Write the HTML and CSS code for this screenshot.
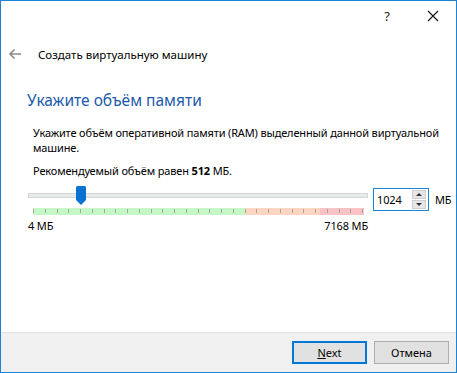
FILE: index.html
```html
<!DOCTYPE html>
<html lang="ru">
<head>
  <meta charset="UTF-8" />
  <title>Создать виртуальную машину</title>
  <link rel="stylesheet" href="styles.css">
</head>
<body>

<div class="window">
  <div class="titlebar">
    <span class="help">?</span>
    <span class="close">
      <svg width="12" height="12" viewBox="0 0 12 12"><path d="M1 1 L11 11 M11 1 L1 11" stroke="#111" stroke-width="1.1" fill="none"/></svg>
    </span>
  </div>

  <div class="nav">
    <svg class="back" width="14" height="12" viewBox="0 0 14 12"><path d="M13 6 H2 M6.5 1.5 L2 6 L6.5 10.5" stroke="#8a8a8a" stroke-width="1.6" fill="none"/></svg>
    <span>Создать виртуальную машину</span>
  </div>

  <div class="content">
    <h1>Укажите объём памяти</h1>
    <p class="desc">Укажите объём оперативной памяти (RAM) выделенный данной виртуальной машине.</p>
    <p class="rec">Рекомендуемый объём равен <b>512</b> МБ.</p>

    <div class="memory-row">
      <div class="slider">
        <div class="track">
          <svg class="handle" width="12" height="19" viewBox="0 0 12 19"><path d="M1 1.5 Q1 0 2.5 0 H9.5 Q11 0 11 1.5 V14 L6 19 L1 14 Z" fill="#0a72d1"/></svg>
        </div>
        <div class="scale"></div>
        <div class="limits"><span>4 МБ</span><span>7168 МБ</span></div>
      </div>

      <div class="spin">
        <span class="value">1024</span>
        <div class="arrows">
          <span class="up"></span>
          <span class="down"></span>
        </div>
      </div>
      <span class="unit">МБ</span>
    </div>
  </div>

  <div class="footer">
    <button class="btn default"><u>N</u>ext</button>
    <button class="btn">Отмена</button>
  </div>
</div>

</body>
</html>
```

FILE: styles.css
```css
:root {
  --accent: #1883d7;
  --text: #000;
  --heading: #1c5aab;
}

body {
  margin: 0;
  font-family: 'Noto Sans', 'Open Sans', sans-serif;
  font-size: 11.5px;
  color: var(--text);
  background: #fff;
}

.window {
  width: 457px;
  height: 373px;
  box-sizing: border-box;
  border: 1px solid var(--accent);
  display: flex;
  flex-direction: column;
  background: #fff;
}

.titlebar {
  height: 29px;
  display: flex;
  justify-content: flex-end;
  align-items: center;
}
.titlebar .help {
  width: 46px;
  text-align: center;
  font-size: 13px;
  color: #222;
  padding-left: 5px;
}
.titlebar .close {
  width: 46px;
  display: flex;
  justify-content: center;
}

.nav {
  height: 48px;
  display: flex;
  align-items: center;
  padding-left: 7px;
}
.nav .back {
  margin-right: 16px;
}

.content {
  flex: 1;
  padding: 0 0 0 26px;
  font-size: 11px;
  letter-spacing: -0.15px;
}

h1 {
  margin: 11px 0 0;
  font-size: 15.5px;
  line-height: 22px;
  font-weight: normal;
  letter-spacing: 0;
  color: var(--heading);
}

.desc {
  margin: 14px 0 0 6px;
  width: 410px;
  line-height: 15px;
}
.rec {
  margin: 8px 0 0 6px;
  line-height: 15px;
}
.rec b {
  font-weight: bold;
}

.memory-row {
  display: flex;
  align-items: flex-start;
  margin-top: 10px;
}

.slider {
  width: 340px;
  margin-left: 1px;
}
.track {
  position: relative;
  height: 3px;
  margin-top: 5px;
  background: #e7eaea;
  border: 1px solid #d6d6d6;
}
.handle {
  position: absolute;
  left: 46px;
  top: -8px;
}
.scale {
  margin: 10px 4px 0 5px;
  height: 7px;
  background:
    repeating-linear-gradient(to right, #a3a3a3 0 1px, transparent 1px 11.75px) 0 1px / 100% 4px no-repeat,
    linear-gradient(to right, #c6f7c6 0 212px, #fdd6c2 212px 287px, #f9c3c5 287px);
}
.limits {
  display: flex;
  justify-content: space-between;
  margin-top: 3px;
  line-height: 15px;
}

.spin {
  margin-left: 5px;
  width: 51px;
  height: 21px;
  border: 1px solid var(--accent);
  display: flex;
  align-items: center;
  justify-content: space-between;
  padding-left: 3px;
}
.spin .value {
  line-height: 15px;
}
.spin .arrows {
  width: 14px;
  height: 19px;
  margin-right: 2px;
  display: flex;
  flex-direction: column;
  gap: 1px;
}
.arrows span {
  flex: 1;
  background: #e6e6e6;
  border: 1px solid #cfcfcf;
  position: relative;
}
.arrows .up::after,
.arrows .down::after {
  content: "";
  position: absolute;
  left: 3px;
  top: 2px;
  border-left: 3px solid transparent;
  border-right: 3px solid transparent;
}
.arrows .up::after {
  border-bottom: 3px solid #333;
}
.arrows .down::after {
  border-top: 3px solid #333;
}

.unit {
  margin-left: 6px;
  margin-top: 4px;
  line-height: 15px;
}

.footer {
  height: 40px;
  border-top: 1px solid #dfdfdf;
  background: #f0f0f0;
  display: flex;
  justify-content: flex-end;
  align-items: flex-start;
  padding: 8px 7px 0 0;
  gap: 7px;
  box-sizing: border-box;
}
.btn {
  width: 75px;
  height: 23px;
  font-family: inherit;
  font-size: 11px;
  background: #e1e1e1;
  border: 1px solid #adadad;
  padding: 0;
  color: #000;
}
.btn.default {
  border: 2px solid #0078d7;
}
```
